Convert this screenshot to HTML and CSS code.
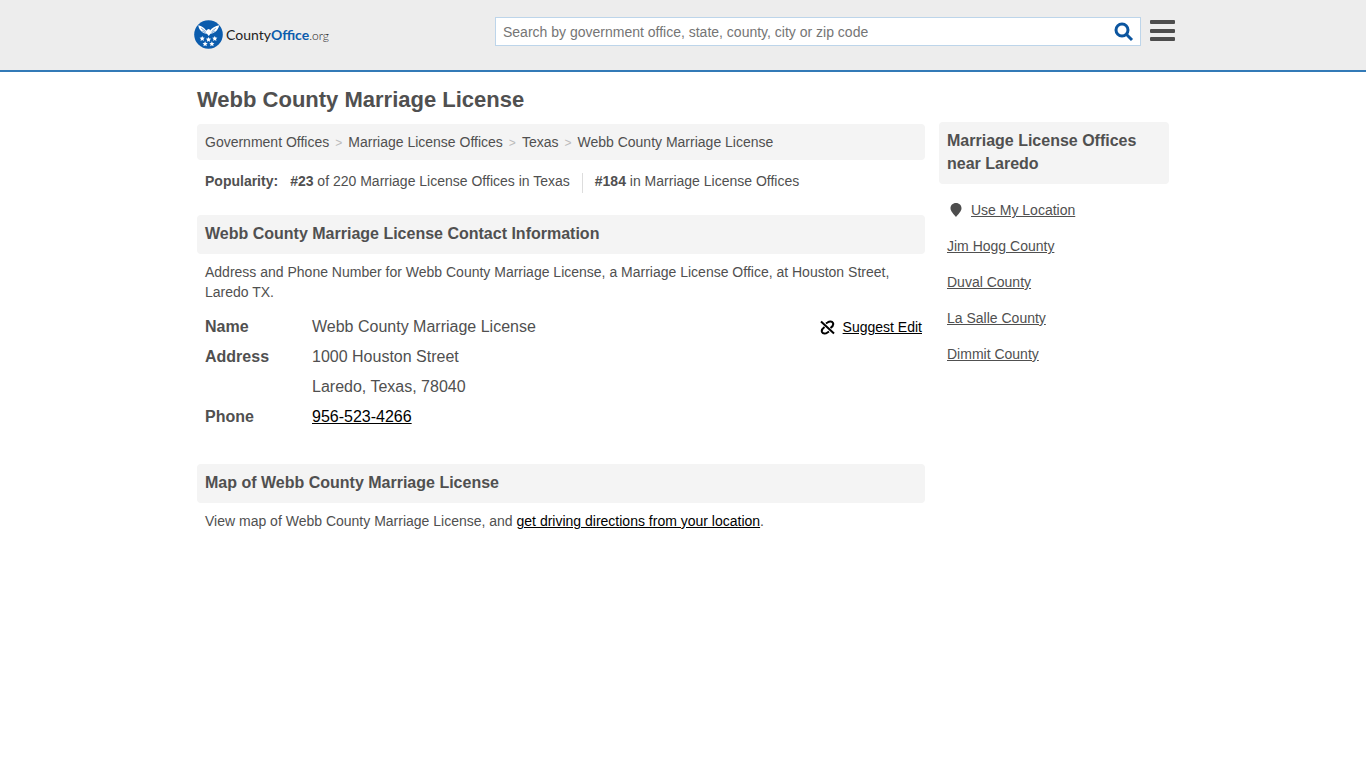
FILE: index.html
```html
<!DOCTYPE html>
<html lang="en">
<head>
<meta charset="utf-8">
<meta name="viewport" content="width=device-width, initial-scale=1">
<title>Webb County Marriage License</title>
<link rel="stylesheet" href="styles.css">
</head>
<body>
<header class="site-header">
  <div class="header-inner">
    <a class="logo" href="#">
      <svg class="logo-mark" viewBox="0 0 30 30" aria-hidden="true">
        <circle cx="15" cy="15" r="14.8" fill="#0b5cad"/>
        <g fill="#fff">
          <path d="M4.500 5.500C8 6.500 11 8 12.600 11.200L13.600 10 15 9.200 16.800 10 16.400 11.200C18.500 8 22 6.500 26 5.500C25.500 9.500 22.500 13 18.500 14L17 14.300 15.300 16.500 13.400 14.300 11.500 14C7.500 12.800 4.800 9.500 4.500 5.500Z"/>
          <path id="star" d="M8.500 16.500l.8 1.700 1.900.2-1.400 1.300.4 1.900-1.700-1-1.700 1 .4-1.900-1.400-1.300 1.900-.2z"/>
          <use href="#star" x="6.500" y="1"/><use href="#star" x="13" y="0"/>
          <use href="#star" x="3" y="5.500"/><use href="#star" x="10" y="5.500"/>
        </g>
        <path d="M7.500 8.500L12 12M22.500 8.500L18.200 12M8.500 11.500L12 13.200M21.500 11.500L18.200 13.200" fill="none" stroke="#0b5cad" stroke-width=".6"/>
      </svg>
      <span class="logo-text">County<b>Office</b><span class="logo-tld">.org</span></span>
    </a>
    <form class="search" role="search">
      <input class="search-input" type="search" aria-label="Search" placeholder="Search by government office, state, county, city or zip code">
      <button class="search-button" type="button" aria-label="Search">
        <svg viewBox="0 0 20 20" width="20" height="20" fill="none" stroke="#0b559f" stroke-width="3" aria-hidden="true"><circle cx="8" cy="8" r="6"/><path d="M12.300 12.300L18 18"/></svg>
      </button>
    </form>
    <button class="menu-button" type="button" aria-label="Menu">
      <svg viewBox="0 0 25 22" width="25" height="22" fill="#4d4d4d" aria-hidden="true"><rect width="25" height="4" rx="1"/><rect y="9" width="25" height="4" rx="1"/><rect y="17" width="25" height="4" rx="1"/></svg>
    </button>
  </div>
</header>
<div class="page">
  <main class="main">
    <h1 class="title">Webb County Marriage License</h1>
    <nav class="breadcrumb" aria-label="Breadcrumb">
      <a href="#">Government Offices</a><span class="sep">&gt;</span><a href="#">Marriage License Offices</a><span class="sep">&gt;</span><a href="#">Texas</a><span class="sep">&gt;</span><a href="#">Webb County Marriage License</a>
    </nav>
    <div class="popularity">
      <b>Popularity:</b>
      <span class="rank"><b>#23</b> of 220 Marriage License Offices in Texas</span>
      <span class="rank rank-next"><b>#184</b> in Marriage License Offices</span>
    </div>
    <section class="section">
      <h2 class="heading">Webb County Marriage License Contact Information</h2>
      <p class="intro">Address and Phone Number for Webb County Marriage License, a Marriage License Office, at Houston Street, Laredo TX.</p>
      <div class="contact">
        <dl class="details">
          <dt>Name</dt><dd>Webb County Marriage License</dd>
          <dt>Address</dt><dd>1000 Houston Street<br>Laredo, Texas, 78040</dd>
          <dt>Phone</dt><dd><a class="strong-link" href="#">956-523-4266</a></dd>
        </dl>
        <a class="suggest" href="#">
          <svg viewBox="0 0 15 15" width="15" height="15" fill="none" stroke="#000" stroke-width="2" aria-hidden="true"><path d="M1 1.500L14 13.500M6 3.500L7.500 2.500C9.500 1 12 1 13 3C13.800 4.800 12.800 6.300 10.500 8M9 11.500L7.500 12.500C5.500 14 3 14 2 12C1.200 10.200 2.200 8.700 4.500 7"/></svg>
          <span class="suggest-text">Suggest Edit</span>
        </a>
      </div>
    </section>
    <section class="section">
      <h2 class="heading">Map of Webb County Marriage License</h2>
      <p class="intro">View map of Webb County Marriage License, and <a class="strong-link" href="#">get driving directions from your location</a>.</p>
    </section>
  </main>
  <aside class="sidebar">
    <h2 class="heading">Marriage License Offices near Laredo</h2>
    <ul class="nearby">
      <li><svg class="pin" viewBox="0 0 12 14" width="12" height="14" fill="#4d4d4d" aria-hidden="true"><path d="M6 0C2.700 0 .5 2.300.5 5.300C.5 8.500 4 11.500 6 14C8 11.500 11.500 8.500 11.500 5.300C11.500 2.300 9.300 0 6 0Z"/></svg><a href="#">Use My Location</a></li>
      <li><a href="#">Jim Hogg County</a></li>
      <li><a href="#">Duval County</a></li>
      <li><a href="#">La Salle County</a></li>
      <li><a href="#">Dimmit County</a></li>
    </ul>
  </aside>
</div>
</body>
</html>
```
FILE: styles.css
```css
* { box-sizing: border-box; }
body {
  margin: 0;
  background: #fff;
  color: #505050;
  font: 14px/20px "Liberation Sans", Arial, sans-serif;
}
a { color: inherit; }
h1, h2, p, ul, dl, dd { margin: 0; }
button { padding: 0; border: 0; background: none; cursor: pointer; }
svg { display: block; flex: none; }

.site-header {
  background: #ededed;
  border-bottom: 2px solid #337ab7;
}
.header-inner {
  display: flex;
  align-items: flex-start;
  max-width: 984px;
  margin: 0 auto;
  padding: 17px 0 21px;
}
.logo {
  display: flex;
  align-items: center;
  gap: 3px;
  width: 301px;
  margin-left: 3px;
  padding-top: 3px;
  text-decoration: none;
}
.logo-mark { width: 29px; height: 29px; }
.logo-text {
  color: #222;
  font: 14px/29px Lato, sans-serif;
}
.logo-text b { color: #0b5cad; }
.logo-tld { font-size: 12px; font-weight: 300; line-height: 1; }
.search {
  display: flex;
  flex: 1;
  height: 29px;
  background: #fff;
  border: 1px solid #bdd5ea;
}
.search-input {
  flex: 1;
  min-width: 0;
  padding: 0 7px;
  border: 0;
  outline: 0;
  background: none;
  color: #505050;
  font: inherit;
}
.search-input::placeholder { color: #757575; }
.search-button {
  display: grid;
  place-items: center;
  width: 32px;
}
.menu-button { margin: 3px 0 0 9px; }

.page {
  display: grid;
  grid-template-columns: minmax(0, 1fr) 230px;
  gap: 14px;
  max-width: 972px;
  margin: 0 auto;
  padding-top: 16px;
}
.title {
  margin-bottom: 12px;
  font-size: 22px;
  line-height: 24px;
}
.breadcrumb {
  padding: 8px;
  background: #f4f4f4;
  border-radius: 4px;
}
.breadcrumb a { text-decoration: none; }
.sep {
  margin: 0 6px;
  color: #bbb;
  font-size: 12px;
  line-height: 1;
}
.popularity {
  display: flex;
  gap: 12px;
  padding: 13px 8px 0;
  line-height: 16px;
}
.rank { padding-bottom: 4px; }
.rank-next {
  padding-left: 12px;
  border-left: 1px solid #ddd;
}
.section { margin-top: 22px; }
.section + .section { margin-top: 32px; }
.heading {
  padding: 7px 8px 9px;
  background: #f4f4f4;
  border-radius: 4px;
  font-size: 16px;
  line-height: 23px;
}
.intro { padding: 8px 8px 0; }
.contact {
  display: flex;
  justify-content: space-between;
  align-items: flex-start;
  padding: 10px 3px 0 8px;
}
.details {
  display: grid;
  grid-template-columns: 107px auto;
  font-size: 16px;
  line-height: 30px;
}
.details dt { font-weight: bold; }
.strong-link { color: #000; }
.suggest {
  display: flex;
  align-items: center;
  gap: 8px;
  color: #000;
  line-height: 30px;
  text-decoration: none;
}
.suggest-text { text-decoration: underline; }
.sidebar { padding-top: 34px; }
.nearby {
  padding: 8px 8px 0;
  list-style: none;
}
.nearby li {
  display: flex;
  align-items: center;
  line-height: 36px;
}
.pin { margin: 0 9px 0 3px; }
```
